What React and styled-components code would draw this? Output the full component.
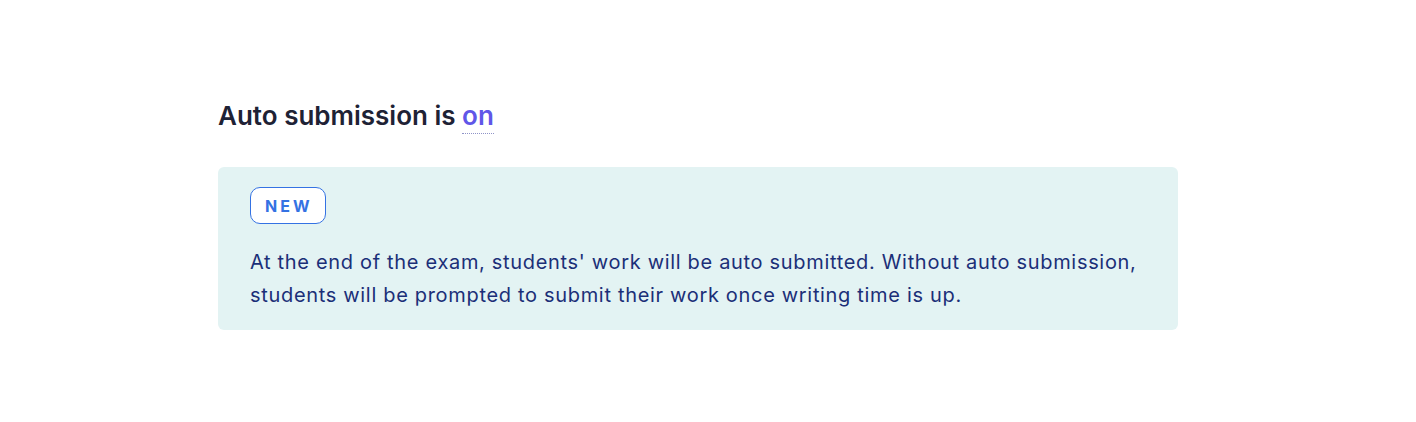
import React from "react";
import styled, { createGlobalStyle } from "styled-components";

const Global = createGlobalStyle`
  body {
    margin: 0;
    background: #ffffff;
    font-family: Inter, "Open Sans", Arial, sans-serif;
  }
`;

const Page = styled.div`
  padding: 98px 0 0 218px;
`;

const Section = styled.section`
  width: 960px;
`;

const Heading = styled.h2`
  margin: 0 0 33px;
  font-size: 26px;
  line-height: 36px;
  font-weight: 600;
  color: #1e2235;
`;

const Status = styled.span`
  color: #6056e8;
  border-bottom: 1px dotted #8f94c8;
  padding-bottom: 2px;
`;

const Notice = styled.div`
  background: #e3f3f3;
  border-radius: 6px;
  padding: 20px 32px 18px;
`;

const Badge = styled.span`
  display: inline-flex;
  align-items: center;
  justify-content: center;
  box-sizing: border-box;
  height: 37px;
  padding: 0 12px 0 14px;
  border: 1px solid #3472e3;
  border-radius: 10px;
  background: #ffffff;
  color: #3472e3;
  font-size: 16px;
  font-weight: 700;
  letter-spacing: 3px;
`;

const Text = styled.p`
  margin: 22px 0 0;
  font-size: 20px;
  line-height: 33px;
  letter-spacing: 0.68px;
  color: #1b2f78;
`;

export default function App() {
  return (
    <Page>
      <Global />
      <Section>
        <Heading>
          Auto submission is <Status>on</Status>
        </Heading>
        <Notice>
          <Badge>NEW</Badge>
          <Text>
            At the end of the exam, students' work will be auto submitted. Without auto submission,
            students will be prompted to submit their work once writing time is up.
          </Text>
        </Notice>
      </Section>
    </Page>
  );
}
